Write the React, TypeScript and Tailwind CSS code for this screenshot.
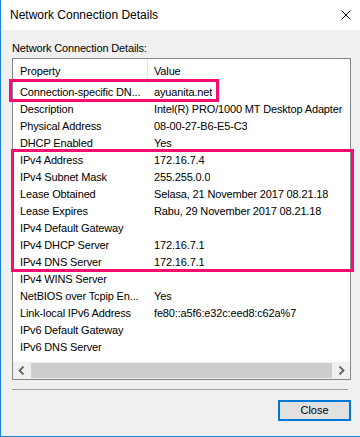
import React from "react";

const rows: [string, string][] = [
  ["Connection-specific DN...", "ayuanita.net"],
  ["Description", "Intel(R) PRO/1000 MT Desktop Adapter"],
  ["Physical Address", "08-00-27-B6-E5-C3"],
  ["DHCP Enabled", "Yes"],
  ["IPv4 Address", "172.16.7.4"],
  ["IPv4 Subnet Mask", "255.255.0.0"],
  ["Lease Obtained", "Selasa, 21 November 2017 08.21.18"],
  ["Lease Expires", "Rabu, 29 November 2017 08.21.18"],
  ["IPv4 Default Gateway", ""],
  ["IPv4 DHCP Server", "172.16.7.1"],
  ["IPv4 DNS Server", "172.16.7.1"],
  ["IPv4 WINS Server", ""],
  ["NetBIOS over Tcpip En...", "Yes"],
  ["Link-local IPv6 Address", "fe80::a5f6:e32c:eed8:c62a%7"],
  ["IPv6 Default Gateway", ""],
  ["IPv6 DNS Server", ""],
];

export default function App() {
  return (
    <div className="relative w-[360px] h-[437px] flex flex-col border-l border-b border-[#1883d7] bg-[#f0f0f0] text-black font-['Liberation_Sans',Arial,sans-serif] overflow-hidden">
      {/* Title bar */}
      <div className="h-[30px] bg-white flex items-center justify-between pl-[9px] pr-[9px] shrink-0">
        <span className="text-[12px] leading-[14px]">Network Connection Details</span>
        <svg width="10" height="10" viewBox="0 0 10 10" className="block">
          <path d="M0.5 0.5 L9.5 9.5 M9.5 0.5 L0.5 9.5" stroke="#111" strokeWidth="1" fill="none" />
        </svg>
      </div>

      {/* Body */}
      <div className="flex-1 flex flex-col">
        <div className="pt-[11px] pl-[11px] h-[25px] text-[11px] leading-[14px] tracking-[-0.15px]">Network Connection Details:</div>
        <div className="mt-[3px] ml-[11px] w-[339px] h-[322px] border border-[#828790] bg-white flex flex-col text-[11px] tracking-[-0.15px]">
          <div className="h-[25px] flex shrink-0">
            <div className="w-[135px] border-r border-[#e5e5e5] pl-[7px] flex items-center">Property</div>
            <div className="pl-[6px] flex items-center">Value</div>
          </div>
          {rows.map(([k, v]) => (
            <div key={k} className="h-[17px] leading-[17px] flex shrink-0">
              <div className="w-[135px] pl-[7px] whitespace-nowrap overflow-hidden">{k}</div>
              <div className="pl-[6px] whitespace-nowrap overflow-hidden">{v}</div>
            </div>
          ))}
          <div className="flex-1" />
          <div className="h-[17px] bg-[#f0f0f0] flex shrink-0">
            <div className="w-[17px] flex items-center justify-center">
              <svg width="7" height="9" viewBox="0 0 7 9">
                <path d="M5.5 0.5 L1.5 4.5 L5.5 8.5" stroke="#606060" strokeWidth="1.8" fill="none" />
              </svg>
            </div>
            <div className="flex-1 my-[1px] mx-[1px] bg-[#cdcdcd]" />
            <div className="w-[17px] flex items-center justify-center">
              <svg width="7" height="9" viewBox="0 0 7 9">
                <path d="M1.5 0.5 L5.5 4.5 L1.5 8.5" stroke="#606060" strokeWidth="1.8" fill="none" />
              </svg>
            </div>
          </div>
        </div>
        <div className="mt-[9px] ml-[11px] w-[336px] h-px bg-[#a0a0a0]" />
        <div className="mt-[10px] self-end mr-[9px] w-[73px] h-[21px] border-2 border-[#0078d7] bg-[#e1e1e1] flex items-center justify-center text-[11px]">
          Close
        </div>
      </div>

      {/* Annotation highlights */}
      <div className="absolute left-[8px] top-[79px] w-[210px] h-[23px] border-[3px] border-[#fe0b6f]" />
      <div className="absolute left-[10px] top-[149px] w-[343px] h-[123px] border-[3px] border-[#fe0b6f]" />
    </div>
  );
}
